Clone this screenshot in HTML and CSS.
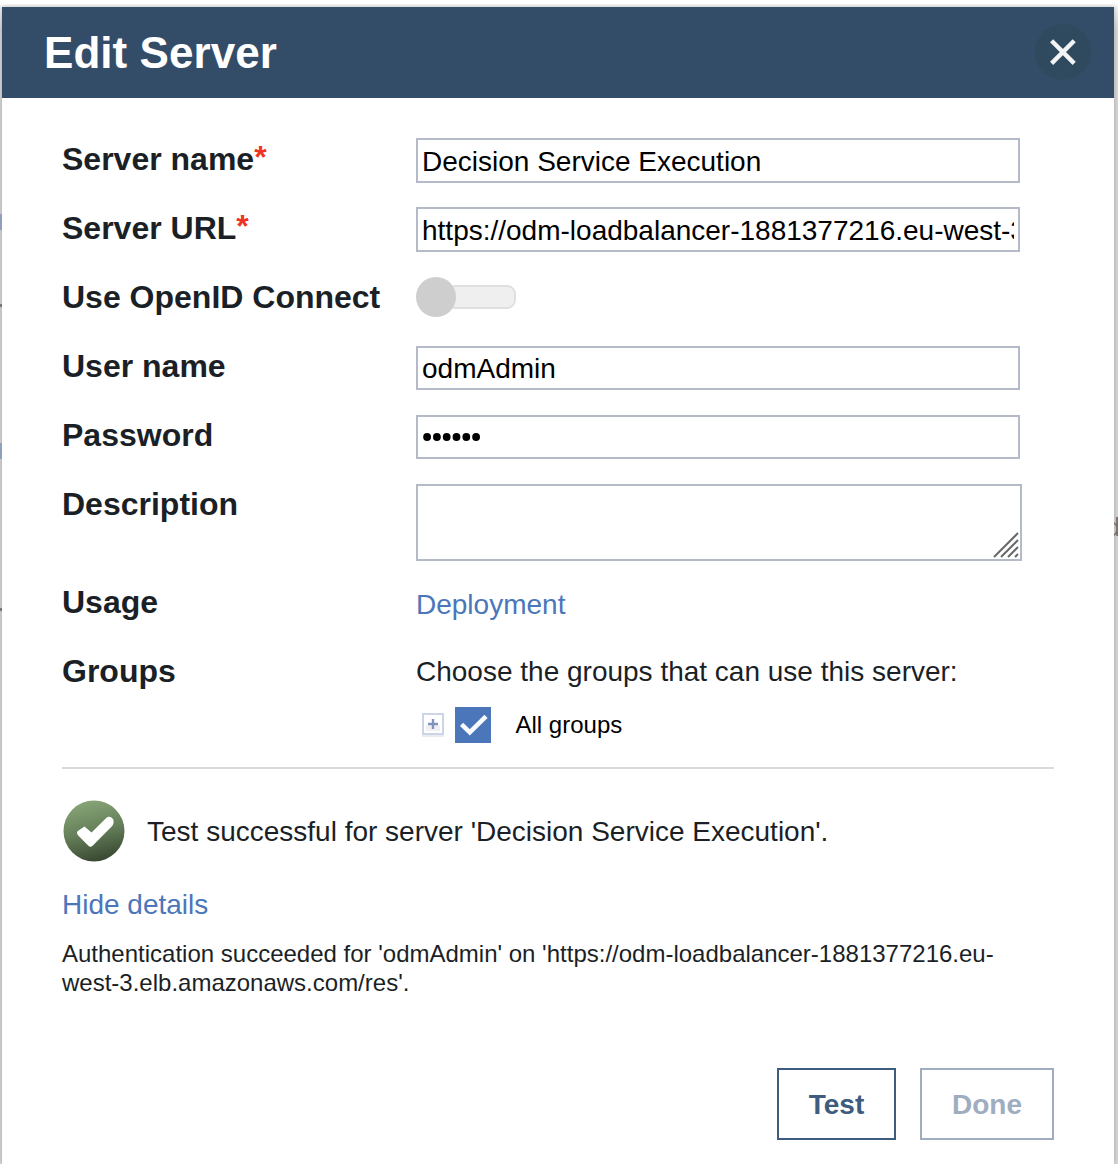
FILE: index.html
```html
<!DOCTYPE html>
<html lang="en">
<head>
<meta charset="utf-8">
<title>Edit Server</title>
<link rel="stylesheet" href="styles.css">
</head>
<body>
<div class="backdrop" aria-hidden="true">
  <i class="sliver sliver-link sliver-a"></i>
  <i class="sliver sliver-dot sliver-b"></i>
  <i class="sliver sliver-link sliver-c"></i>
  <i class="sliver sliver-dot sliver-d"></i>
  <span class="page-text">d</span>
</div>
<main class="dialog">
  <header class="dialog-header">
    <h1 class="title">Edit Server</h1>
    <button class="close" aria-label="Close">
      <svg width="58" height="58" viewBox="0 0 58 58"><circle cx="29" cy="28" r="28" fill="#2f4a5e"/><path d="M17.6 16.8 40.2 39.4M40.2 16.8 17.6 39.4" stroke="#f1f3f5" stroke-width="4.4" fill="none"/></svg>
    </button>
  </header>
  <form class="form">
    <div class="row"><label class="label">Server name<span class="required">*</span></label><input class="field" type="text" value="Decision Service Execution"></div>
    <div class="row"><label class="label">Server URL<span class="required">*</span></label><input class="field" type="text" value="https://odm-loadbalancer-1881377216.eu-west-3.elb.amazonaws.com/res"></div>
    <div class="row"><label class="label">Use OpenID Connect</label><span class="toggle"><span class="knob"></span><span class="track"></span></span></div>
    <div class="row"><label class="label">User name</label><input class="field field-low" type="text" value="odmAdmin"></div>
    <div class="row"><label class="label">Password</label>
      <div class="field field-low password"><svg width="60" height="10" viewBox="0 0 60 10"><g fill="#000"><circle cx="5.1" cy="5" r="3.9"/><circle cx="14.9" cy="5" r="3.9"/><circle cx="24.7" cy="5" r="3.9"/><circle cx="34.5" cy="5" r="3.9"/><circle cx="44.3" cy="5" r="3.9"/><circle cx="54.1" cy="5" r="3.9"/></g></svg></div>
    </div>
    <div class="row row-tall"><label class="label">Description</label>
      <div class="area"><svg width="26" height="26" viewBox="0 0 26 26"><path d="M1 25 25 1M8 25 25 8M15 25 25 15M22 25 25 22" stroke="#686868" stroke-width="2" fill="none"/></svg></div>
    </div>
    <div class="row"><label class="label">Usage</label><a class="link usage">Deployment</a></div>
    <div class="row row-groups"><label class="label">Groups</label>
      <div>
        <p class="hint">Choose the groups that can use this server:</p>
        <div class="tree">
          <svg class="expand" width="26" height="28" viewBox="0 0 26 28"><rect x="2" y="5" width="22" height="21" fill="#e9ebf1"/><rect x="3" y="3" width="20" height="20" fill="#fff" stroke="#ccd5e8" stroke-width="2"/><path d="M6 14h14v6H6z" fill="#f0f0f4"/><path d="M8 13h10M13 8v10" stroke="#8193bd" stroke-width="2.4"/></svg>
          <svg class="check" width="36" height="36" viewBox="0 0 36 36"><path d="M0 0h36v36H0z" fill="#4c76ba"/><path d="M6.6 17.4 14.8 25.4 31 9.4" stroke="#f8fafc" stroke-width="4.6" fill="none"/></svg>
          <span>All groups</span>
        </div>
      </div>
    </div>
  </form>
  <section class="result">
    <div class="status">
      <svg width="64" height="64" viewBox="0 0 64 64"><defs><linearGradient id="green" x1=".35" y1="0" x2=".6" y2="1"><stop offset="0" stop-color="#88a577"/><stop offset=".5" stop-color="#65805a"/><stop offset="1" stop-color="#384630"/></linearGradient></defs><circle cx="32" cy="32" r="30.5" fill="url(#green)"/><path d="M15.8 32 22.5 27.6 29.5 33.5 44 19.2Q47.5 16 51 20Q52.6 23.6 50.2 27L30.6 46.8Q28.6 48.6 26.4 46.8L16.2 36.4Q14 34 15.8 32Z" fill="#fff"/></svg>
      <span>Test successful for server 'Decision Service Execution'.</span>
    </div>
    <a class="link toggle-details">Hide details</a>
    <p class="details">Authentication succeeded for 'odmAdmin' on 'https://odm-loadbalancer-1881377216.eu-<br>west-3.elb.amazonaws.com/res'.</p>
  </section>
  <footer class="actions">
    <button class="button test">Test</button>
    <button class="button done">Done</button>
  </footer>
</main>
</body>
</html>
```
FILE: styles.css
```css
* { box-sizing: border-box; }
html, body { margin: 0; height: 100%; overflow: hidden; }
body {
  font-family: "Liberation Sans", Arial, sans-serif;
  font-size: 28px;
  color: #1b1f26;
  background: linear-gradient(#fff, #fff 3px, #f3f3f3 7px, #d8d8d8 30px, #d8d8d8);
  padding: 7px 4px 0 2px;
}
h1, p { margin: 0; }
.backdrop { position: absolute; inset: 0; overflow: hidden; }
.sliver { position: absolute; left: 0; width: 2px; }
.sliver-link { height: 16px; background: #8fa0bf; z-index: 1; }
.sliver-dot { height: 3px; background: #777; z-index: 1; }
.sliver-a { top: 214px; }
.sliver-b { top: 304px; }
.sliver-c { top: 443px; }
.sliver-d { top: 608px; }
.page-text { position: absolute; left: 1106px; top: 511px; font-size: 25px; line-height: 32px; color: #777; }
.dialog {
  position: relative;
  height: 1157px;
  background: #fff;
  box-shadow: 0 0 5px rgba(0, 0, 0, .25);
  clip-path: inset(-3px -4px 0 -2px);
}
.dialog-header {
  height: 91px;
  padding: 0 22px 0 42px;
  display: flex;
  align-items: center;
  justify-content: space-between;
  background: #334d68;
}
.title { font-size: 44px; line-height: 52px; letter-spacing: .05px; color: #fff; }
.close { display: flex; width: 58px; height: 58px; padding: 0; border: 0; background: none; }
.form { padding: 40px 60px 0; }
.row { display: grid; grid-template-columns: 354px 1fr; align-items: start; height: 69px; }
.row-tall { height: 98px; }
.row-groups { height: 117px; }
.label { font-size: 32px; font-weight: bold; line-height: 42px; white-space: nowrap; }
.required { color: #ee3524; display: inline-block; line-height: 30px; transform: translateY(-2px); }
.field {
  width: 604px;
  height: 45px;
  padding: 2px 4px 0;
  border: 2px solid #b4bac7;
  border-radius: 0;
  background: #fff;
  color: #000;
  font: inherit;
  outline: 0;
}
.field-low { height: 44px; margin-top: 1px; padding-top: 1px; }
.password { display: flex; align-items: center; padding: 0; padding-left: 4px; }
.toggle { display: flex; align-items: center; height: 40px; margin-top: 1px; }
.knob { width: 40px; height: 40px; border-radius: 50%; background: #cecece; z-index: 1; }
.track { width: 70px; height: 24px; margin-left: -10px; border: 2px solid #dfdfdf; border-radius: 9px; background: #efefef; }
.area { display: flex; align-items: flex-end; justify-content: flex-end; width: 606px; height: 77px; margin-top: 1px; padding: 1px; border: 2px solid #b4bac7; }
.link { color: #4c76ba; }
.usage { line-height: 48px; }
.hint { line-height: 44px; }
.tree { display: flex; align-items: center; height: 36px; margin-top: 13px; padding-left: 4px; font-size: 24px; color: #000; }
.tree span { margin-left: 24.5px; line-height: 36px; }
.expand { margin-right: 9px; }
.result { margin: 0 60px; padding-top: 30px; border-top: 2px solid #d8dadc; }
.status { display: flex; align-items: center; gap: 21px; height: 64px; white-space: nowrap; }
.status span { padding-top: 2px; }
.toggle-details { display: block; margin-top: 26px; line-height: 32px; }
.details { margin-top: 18px; font-size: 24px; line-height: 29px; white-space: nowrap; }
.actions { display: flex; justify-content: flex-end; gap: 24px; margin: 71px 60px 0; }
.button { height: 72px; padding: 2px 0 0; background: #fff; font: bold 28px "Liberation Sans", Arial, sans-serif; }
.test { width: 119px; border: 2px solid #3d5c7e; color: #3d5c7e; }
.done { width: 134px; border: 2px solid #9eadbf; color: #9eadbf; }
```
